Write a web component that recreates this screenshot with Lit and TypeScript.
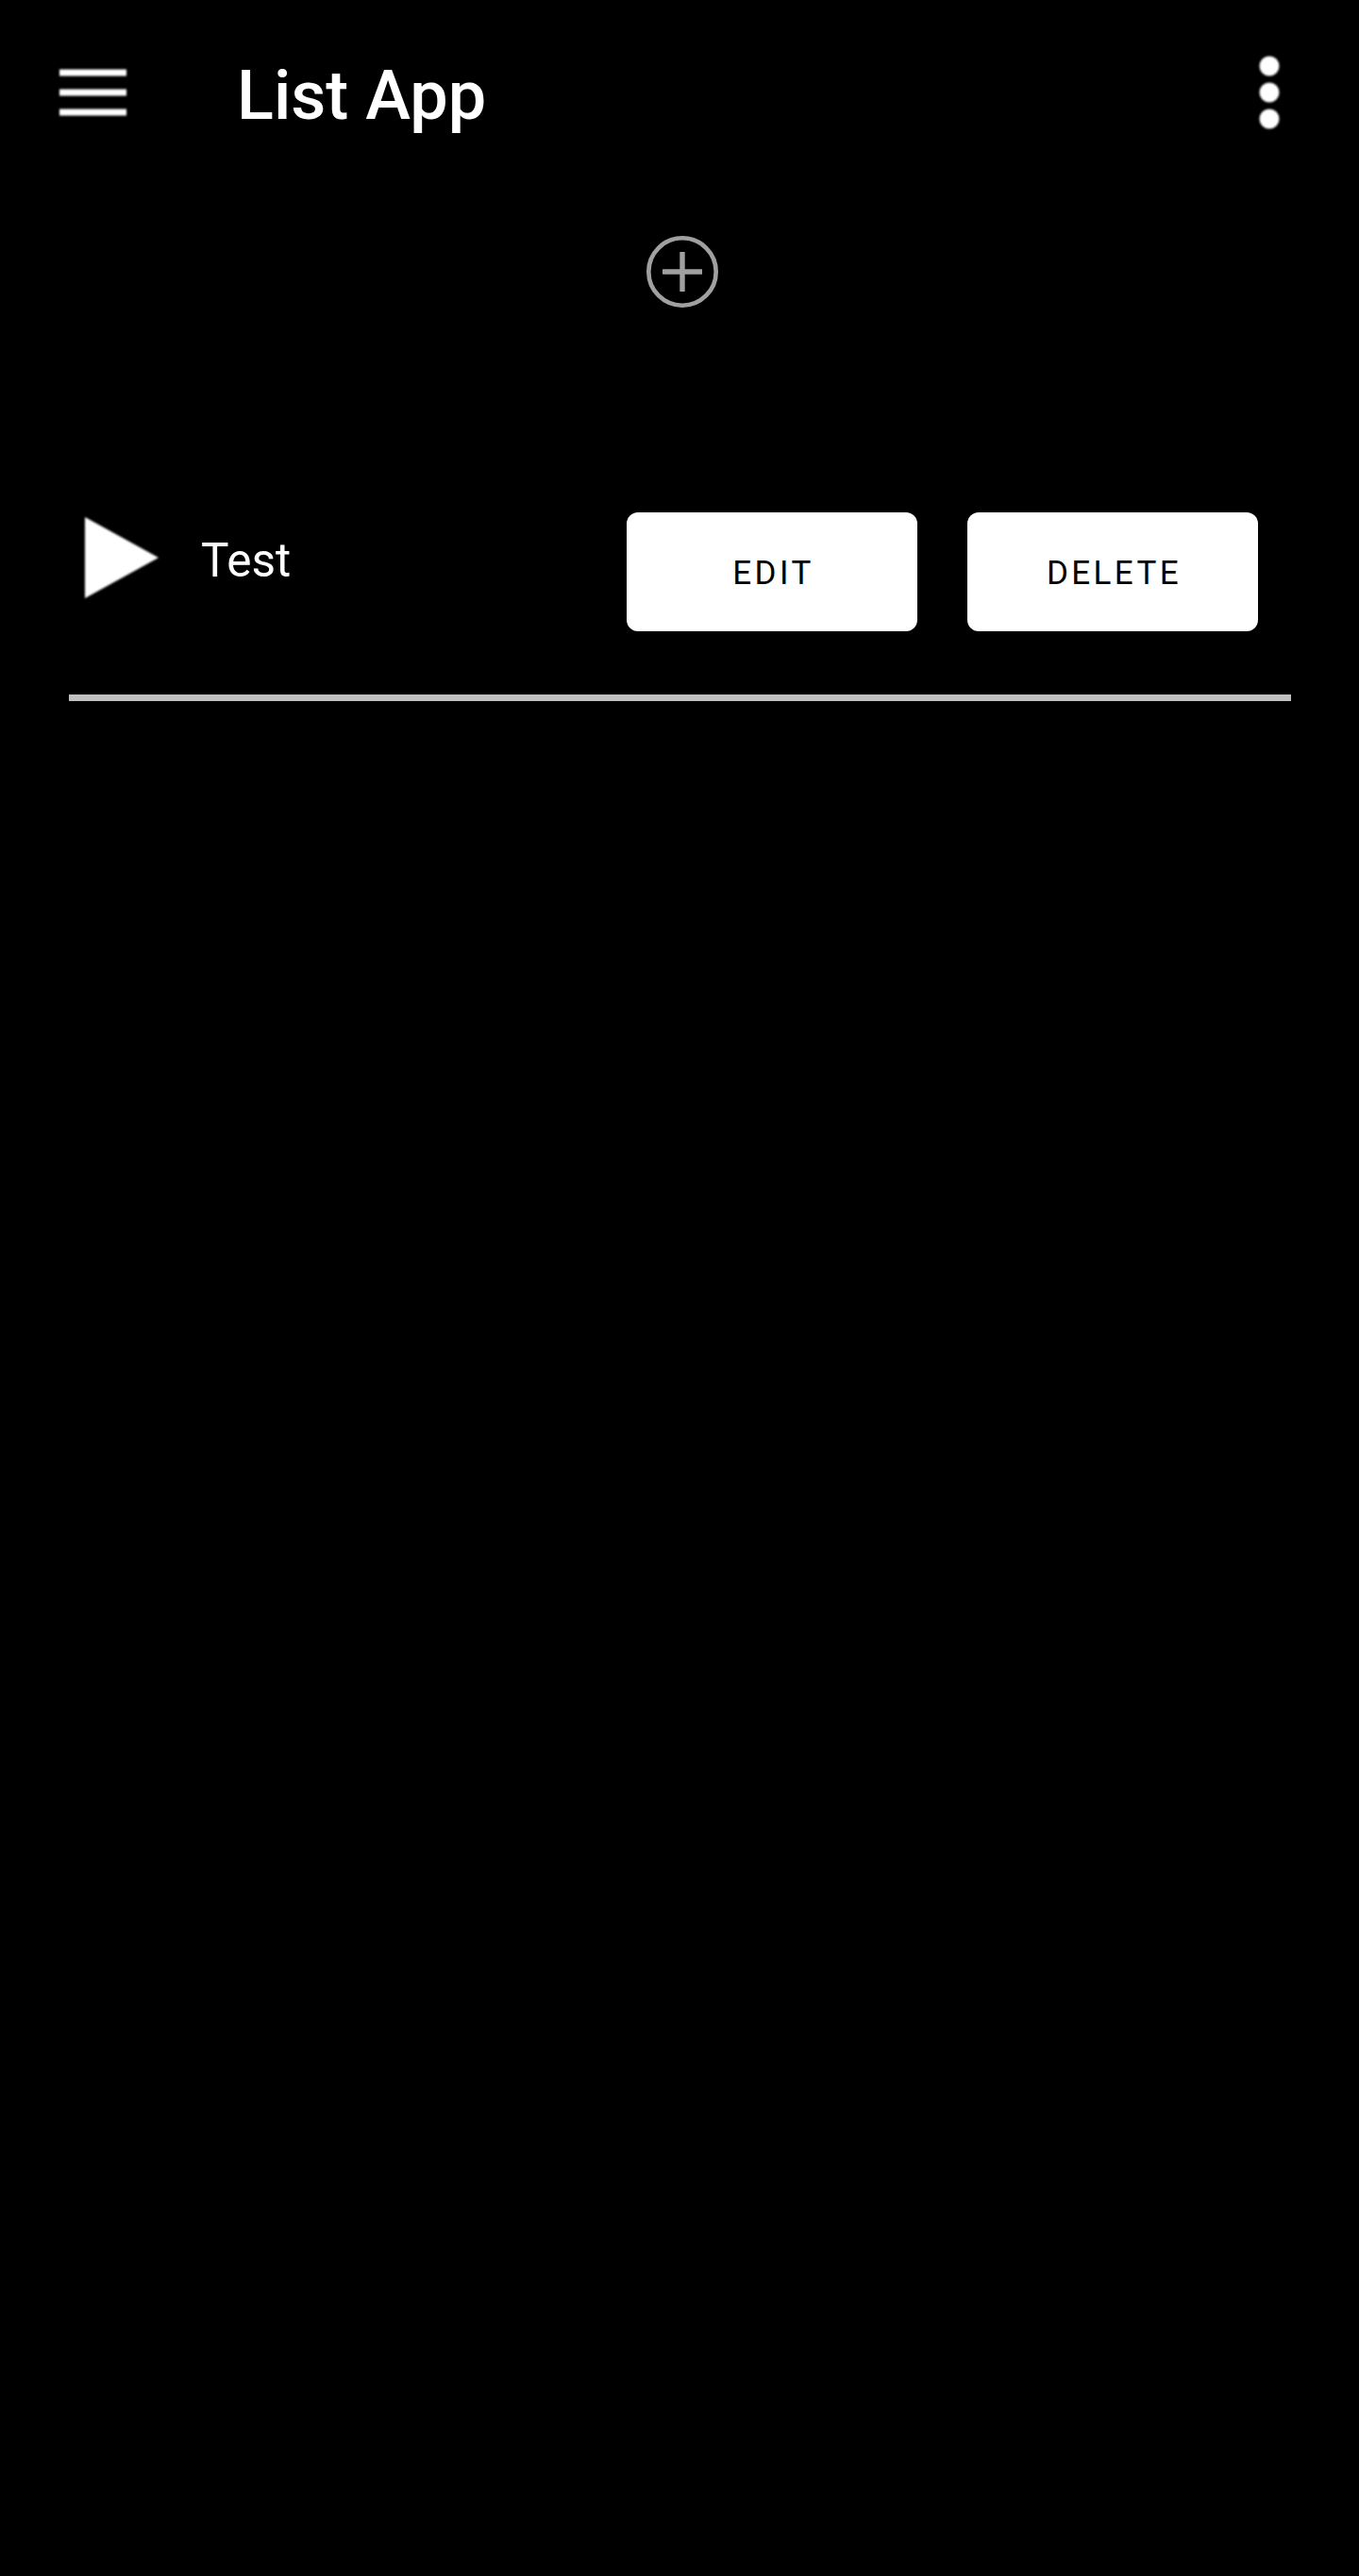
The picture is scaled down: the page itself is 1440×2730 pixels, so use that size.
import { LitElement, html, css } from "lit";
import { customElement } from "lit/decorators.js";

@customElement("app-root")
export class AppRoot extends LitElement {
  static styles = css`
    :host {
      display: block;
      min-height: 2730px;
      background: #000;
      color: #fff;
      font-family: Roboto, "Liberation Sans", sans-serif;
    }
    .bar {
      display: flex;
      align-items: center;
      height: 196px;
      padding: 0 82px 0 63px;
    }
    .soft {
      display: block;
      flex: none;
      filter: blur(0.9px);
    }
    .title {
      margin: 0 0 0 117px;
      flex: 1;
      font-size: 72px;
      font-weight: 500;
      line-height: 84px;
      position: relative;
      top: 4px;
    }
    .add-row {
      display: flex;
      justify-content: center;
      padding: 54px 0 0 6px;
    }
    .add {
      display: block;
      width: 76px;
      height: 76px;
      filter: blur(0.4px);
    }
    .item {
      display: flex;
      margin: 217px 72px 0 73px;
      padding: 0 35px 67px 17px;
      border-bottom: 7px solid #c0c0c0;
    }
    .lead {
      display: flex;
      align-items: center;
      align-self: flex-start;
      flex: 1;
      margin-top: 5px;
    }
    .name {
      margin-left: 45px;
      font-size: 49.5px;
      line-height: 60px;
      position: relative;
      top: 3px;
    }
    .actions {
      display: flex;
      gap: 53px;
    }
    button {
      width: 308px;
      height: 126px;
      border: 0;
      border-radius: 12px;
      background: #fff;
      color: #000;
      font-family: inherit;
      font-size: 35px;
      font-weight: 400;
      letter-spacing: 3.4px;
      padding: 3px 0 0 3px;
    }
  `;

  render() {
    return html`
      <header class="bar">
        <svg class="soft" width="71" height="50" viewBox="0 0 71 50" fill="#fff" aria-label="Menu">
          <rect y="0.5" width="71" height="7" />
          <rect y="21.5" width="71" height="7" />
          <rect y="42.5" width="71" height="7" />
        </svg>
        <h1 class="title">List App</h1>
        <svg class="soft" width="26" height="84" viewBox="0 0 26 84" fill="#fff" aria-label="More">
          <circle cx="13" cy="14" r="10.5" />
          <circle cx="13" cy="42" r="10.5" />
          <circle cx="13" cy="70" r="10.5" />
        </svg>
      </header>
      <div class="add-row">
        <svg class="add" viewBox="0 0 76 76" fill="none" stroke="#a0a0a0" aria-label="Add">
          <circle cx="38" cy="38" r="35.7" stroke-width="4.6" />
          <path d="M38 17V59M17 38H59" stroke-width="5.4" />
        </svg>
      </div>
      <section class="item">
        <div class="lead">
          <svg class="soft" width="78" height="86" viewBox="0 0 78 86" fill="#fff" aria-label="Play">
            <path d="M0 0L78 43L0 86Z" />
          </svg>
          <span class="name">Test</span>
        </div>
        <div class="actions">
          <button>EDIT</button>
          <button>DELETE</button>
        </div>
      </section>
    `;
  }
}
